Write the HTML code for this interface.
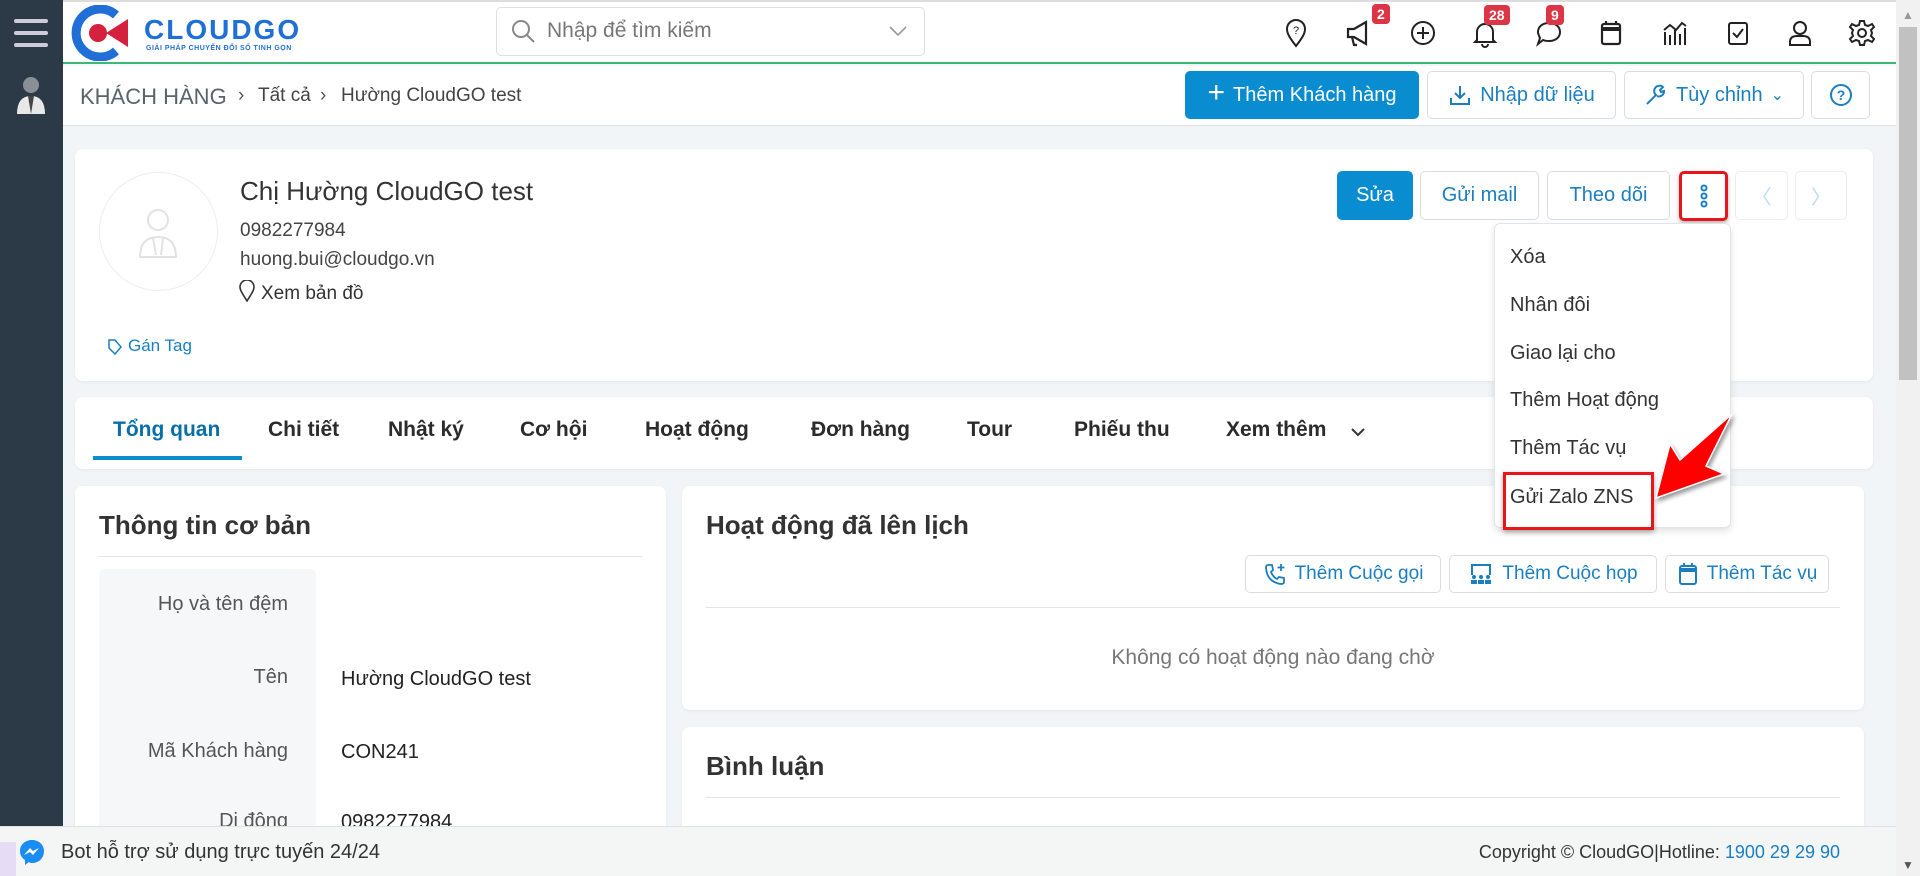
<!DOCTYPE html>
<html style="overflow:hidden"><head><meta charset="utf-8"><style>
*{box-sizing:border-box;margin:0;padding:0}
body{width:1920px;height:876px;overflow:hidden;background:#f2f5f8;font-family:"Liberation Sans","Noto Sans CJK SC",sans-serif;position:relative;color:#222}
.a{position:absolute}
.card{position:absolute;background:#fff;border-radius:8px;box-shadow:0 1px 3px rgba(0,0,0,.06)}
.btn{position:absolute;border:1px solid #d9dde2;border-radius:5px;background:#fff;color:#1a7fc1;font-size:20px;display:flex;align-items:center;justify-content:center;gap:8px}
.ic{position:absolute;top:18px;width:30px;height:30px}
.badge{position:absolute;background:#dc3545;color:#fff;font-size:14px;font-weight:bold;border-radius:4px;padding:1px 5px;line-height:18px}
.tab{position:absolute;top:418px;font-size:21px;font-weight:600;color:#2b2b2b}
.mi{position:absolute;left:1510px;font-size:20px;color:#333}
.lbl{position:absolute;right:0;width:190px;text-align:right;font-size:20px;color:#555}
</style></head><body>
<div class="a" style="left:0;top:0;width:1920px;height:64px;background:#fff;border-bottom:2px solid #3cb878"></div>
<div class="a" style="left:0;top:0;width:1920px;height:2px;background:#ddd"></div>
<div class="a" style="left:0;top:0;width:63px;height:876px;background:#2c3a48"></div>
<div class="a" style="left:14px;top:19px;width:34px;height:4px;background:#ccd;border-radius:2px"></div>
<div class="a" style="left:14px;top:31px;width:34px;height:4px;background:#ccd;border-radius:2px"></div>
<div class="a" style="left:14px;top:43px;width:34px;height:4px;background:#ccd;border-radius:2px"></div>
<svg class="a" style="left:14px;top:74px" width="34" height="40" viewBox="0 0 34 40"><circle cx="17" cy="11" r="8" fill="#8a8f96"/><path d="M3 40 Q3 22 17 22 Q31 22 31 40Z" fill="#e8e8e8"/><path d="M14 22 L17 40 L20 22Z" fill="#444"/></svg>
<svg class="a" style="left:70px;top:5px" width="62" height="56" viewBox="0 0 62 56"><path d="M46 10 A24 24 0 1 0 46 46" fill="none" stroke="#1f6fd6" stroke-width="9"/><circle cx="28" cy="28" r="9" fill="#d4213d"/><path d="M36 28 L58 14 L58 42Z" fill="#d4213d"/></svg>
<div class="a" style="left:144px;top:14px;font-size:28px;font-weight:bold;color:#1f6fd6;letter-spacing:2px">CLOUDGO</div>
<div class="a" style="left:146px;top:45px;font-size:7px;font-weight:bold;color:#1f6fd6;letter-spacing:.5px">GIẢI PHÁP CHUYỂN ĐỔI SỐ TINH GỌN</div>
<div class="a" style="left:496px;top:7px;width:429px;height:49px;border:1px solid #dcdfe3;border-radius:5px"></div>
<svg class="a" style="left:510px;top:18px" width="26" height="26" viewBox="0 0 26 26"><circle cx="11" cy="11" r="8" fill="none" stroke="#888" stroke-width="2"/><path d="M17 17 L24 24" stroke="#888" stroke-width="2"/></svg>
<div class="a" style="left:547px;top:19px;font-size:21px;color:#777">Nhập để tìm kiếm</div>
<svg class="a" style="left:888px;top:24px" width="20" height="14"><path d="M2 3 L10 11 L18 3" fill="none" stroke="#999" stroke-width="1.6"/></svg>
<svg class="ic" style="left:1281px" viewBox="0 0 30 30" fill="none" stroke="#222" stroke-width="2"><path d="M15 28 C8 19 6 15 6 11 A9 9 0 0 1 24 11 C24 15 22 19 15 28Z"/><text x="15" y="16" font-size="11" text-anchor="middle" fill="#222" stroke="none">?</text></svg>
<svg class="ic" style="left:1344px" viewBox="0 0 30 30" fill="none" stroke="#222" stroke-width="2.2"><path d="M4 11 H10 L22 4 V26 L10 19 H4Z M8 19 L10 27 H13"/></svg>
<svg class="ic" style="left:1408px" viewBox="0 0 30 30" fill="none" stroke="#222" stroke-width="2"><circle cx="15" cy="15" r="11"/><path d="M15 9 V21 M9 15 H21"/></svg>
<svg class="ic" style="left:1470px" viewBox="0 0 30 30" fill="none" stroke="#222" stroke-width="2"><path d="M7 22 V14 A8 8 0 0 1 23 14 V22 L25 24 H5Z M12 26 A3 3 0 0 0 18 26"/></svg>
<svg class="ic" style="left:1534px" viewBox="0 0 30 30" fill="none" stroke="#222" stroke-width="2"><path d="M15 5 C22 5 26 9 26 14 C26 19 22 23 15 23 C13 23 11 23 9 22 L4 26 L6 20 C5 18 4 16 4 14 C4 9 8 5 15 5Z"/></svg>
<svg class="ic" style="left:1596px" viewBox="0 0 30 30" fill="none" stroke="#222" stroke-width="2.2"><rect x="6" y="6" width="18" height="20" rx="2"/><path d="M6 11 H24" stroke-width="4"/><path d="M10 3 V7 M20 3 V7"/></svg>
<svg class="ic" style="left:1660px" viewBox="0 0 30 30" fill="none" stroke="#222" stroke-width="2"><path d="M5 27 V14 M10 27 V17 M15 27 V12 M20 27 V16 M25 27 V10 M4 12 L10 7 L16 12 L22 5 L26 8"/></svg>
<svg class="ic" style="left:1723px" viewBox="0 0 30 30" fill="none" stroke="#222" stroke-width="2"><rect x="6" y="5" width="18" height="21" rx="2"/><path d="M10 15 L14 19 L20 11"/></svg>
<svg class="ic" style="left:1785px" viewBox="0 0 30 30" fill="none" stroke="#222" stroke-width="2"><circle cx="15" cy="10" r="6"/><path d="M5 27 V24 Q5 18 12 18 H18 Q25 18 25 24 V27Z"/></svg>
<svg class="ic" style="left:1847px" viewBox="0 0 30 30" fill="none" stroke="#222" stroke-width="2"><circle cx="15" cy="15" r="4"/><path d="M13 3 H17 L18 7 L21 8 L25 6 L27 9 L24 12 L25 15 L24 18 L27 21 L25 24 L21 22 L18 23 L17 27 H13 L12 23 L9 22 L5 24 L3 21 L6 18 L5 15 L6 12 L3 9 L5 6 L9 8 L12 7Z"/></svg>
<div class="badge" style="left:1372px;top:4px">2</div>
<div class="badge" style="left:1484px;top:5px">28</div>
<div class="badge" style="left:1546px;top:5px">9</div>
<div class="a" style="left:63px;top:66px;width:1833px;height:60px;background:#fff;border-bottom:1px solid #dde1e5"></div>
<div class="a" style="left:80px;top:84px;font-size:22px;color:#58636d">KHÁCH HÀNG</div>
<div class="a" style="left:238px;top:85px;font-size:19px;color:#555">›</div>
<div class="a" style="left:258px;top:85px;font-size:19px;color:#444">Tất cả</div>
<div class="a" style="left:320px;top:85px;font-size:19px;color:#555">›</div>
<div class="a" style="left:341px;top:85px;font-size:19px;color:#444">Hường CloudGO test</div>
<div class="btn" style="left:1185px;top:71px;width:234px;height:48px;background:#0a8dd0;border-color:#0a8dd0;color:#fff"><span style="font-size:30px;font-weight:300;margin-top:-4px">+</span>Thêm Khách hàng</div>
<div class="btn" style="left:1427px;top:71px;width:189px;height:48px"><svg width="24" height="24" viewBox="0 0 24 24" fill="none" stroke="#1a7fc1" stroke-width="2"><path d="M12 3 V15 M7 10 L12 15 L17 10 M3 15 V21 H21 V15"/></svg>Nhập dữ liệu</div>
<div class="btn" style="left:1624px;top:71px;width:180px;height:48px"><svg width="24" height="24" viewBox="0 0 24 24" fill="none" stroke="#1a7fc1" stroke-width="2"><path d="M3 21 L12 12 A5 5 0 0 1 19 4 L16 7 L17 9 L20 8 A5 5 0 0 1 13 13"/></svg>Tùy chỉnh <span style="font-size:16px">⌄</span></div>
<div class="btn" style="left:1811px;top:71px;width:59px;height:48px"><svg width="26" height="26" viewBox="0 0 26 26" fill="none" stroke="#1a7fc1" stroke-width="2"><circle cx="13" cy="13" r="10"/><text x="13" y="18" font-size="14" font-weight="bold" text-anchor="middle" fill="#1a7fc1" stroke="none">?</text></svg></div>
<div class="card" style="left:75px;top:149px;width:1798px;height:232px"></div>
<div class="a" style="left:99px;top:172px;width:119px;height:119px;border:1px solid #eee;border-radius:50%"></div>
<svg class="a" style="left:136px;top:207px" width="48" height="52" viewBox="0 0 48 52" fill="none" stroke="#e2e2e2" stroke-width="2"><circle cx="22" cy="13" r="10"/><path d="M4 50 Q4 30 22 30 Q40 30 40 50Z M17 31 L20 48 M27 31 L25 48"/></svg>
<div class="a" style="left:240px;top:176px;font-size:26px;color:#333">Chị Hường CloudGO test</div>
<div class="a" style="left:240px;top:220px;font-size:19px;color:#444">0982277984</div>
<div class="a" style="left:240px;top:249px;font-size:19px;color:#444">huong.bui@cloudgo.vn</div>
<svg class="a" style="left:239px;top:280px" width="16" height="22" viewBox="0 0 16 22" fill="none" stroke="#333" stroke-width="1.6"><path d="M8 21 C3 13 1 10 1 7 A7 7 0 0 1 15 7 C15 10 13 13 8 21Z"/></svg>
<div class="a" style="left:261px;top:283px;font-size:19px;color:#333">Xem bản đồ</div>
<svg class="a" style="left:107px;top:338px" width="16" height="18" viewBox="0 0 16 18" fill="none" stroke="#1a7fc1" stroke-width="1.5"><path d="M2 2 H8 L14 9 L8 16 L2 10Z"/></svg>
<div class="a" style="left:128px;top:336px;font-size:17px;color:#1a7fc1">Gán Tag</div>
<div class="btn" style="left:1337px;top:171px;width:76px;height:49px;background:#0a8dd0;border-color:#0a8dd0;color:#fff">Sửa</div>
<div class="btn" style="left:1420px;top:171px;width:119px;height:49px">Gửi mail</div>
<div class="btn" style="left:1547px;top:171px;width:123px;height:49px">Theo dõi</div>
<div class="btn" style="left:1679px;top:171px;width:49px;height:50px;border:3px solid #e8151b;box-shadow:0 2px 4px rgba(0,0,0,.3)"><svg width="10" height="26" viewBox="0 0 10 26" fill="none" stroke="#1a7fc1" stroke-width="2"><circle cx="5" cy="5" r="2.5"/><circle cx="5" cy="13" r="2.5"/><circle cx="5" cy="21" r="2.5"/></svg></div>
<div class="btn" style="left:1735px;top:171px;width:53px;height:49px;color:#b9dcf1;border-color:#eceef0">〈</div>
<div class="btn" style="left:1795px;top:171px;width:52px;height:49px;color:#b9dcf1;border-color:#eceef0">〉</div>
<div class="card" style="left:75px;top:397px;width:1798px;height:72px"></div>
<div class="tab" style="left:113px;color:#0a6ea8">Tổng quan</div>
<div class="a" style="left:93px;top:456px;width:149px;height:4px;background:#0a8dd0"></div>
<div class="tab" style="left:268px">Chi tiết</div>
<div class="tab" style="left:388px">Nhật ký</div>
<div class="tab" style="left:520px">Cơ hội</div>
<div class="tab" style="left:645px">Hoạt động</div>
<div class="tab" style="left:811px">Đơn hàng</div>
<div class="tab" style="left:967px">Tour</div>
<div class="tab" style="left:1074px">Phiếu thu</div>
<div class="tab" style="left:1226px">Xem thêm</div>
<svg class="a" style="left:1350px;top:426px" width="16" height="12"><path d="M2 3 L8 9 L14 3" fill="none" stroke="#333" stroke-width="2"/></svg>
<div class="card" style="left:75px;top:486px;width:591px;height:390px;border-radius:8px 8px 0 0"></div>
<div class="a" style="left:99px;top:510px;font-size:26px;font-weight:600;color:#333">Thông tin cơ bản</div>
<div class="a" style="left:99px;top:556px;width:543px;height:1px;background:#e2e4e7"></div>
<div class="a" style="left:99px;top:569px;width:217px;height:300px;background:#f6f7f9;border-radius:6px">
<div class="lbl" style="right:28px;top:24px">Họ và tên đệm</div>
<div class="lbl" style="right:28px;top:97px">Tên</div>
<div class="lbl" style="right:28px;top:171px">Mã Khách hàng</div>
<div class="lbl" style="right:28px;top:241px">Di động</div>
</div>
<div class="a" style="left:341px;top:668px;font-size:20px;color:#222">Hường CloudGO test</div>
<div class="a" style="left:341px;top:741px;font-size:20px;color:#222">CON241</div>
<div class="a" style="left:341px;top:811px;font-size:20px;color:#222">0982277984</div>
<div class="card" style="left:682px;top:486px;width:1182px;height:224px"></div>
<div class="a" style="left:706px;top:510px;font-size:26px;font-weight:600;color:#333">Hoạt động đã lên lịch</div>
<div class="btn" style="left:1245px;top:555px;width:196px;height:38px;font-size:19px"><svg width="24" height="24" viewBox="0 0 24 24" fill="none" stroke="#1a7fc1" stroke-width="1.8"><path d="M5 3 L9 3 L10 8 L8 10 Q10 15 14 17 L16 15 L21 16 V20 Q21 22 18 22 Q4 20 3 6 Q3 3 5 3Z M18 2 V9 M14.5 5.5 H21.5"/></svg>Thêm Cuộc gọi</div>
<div class="btn" style="left:1449px;top:555px;width:208px;height:38px;font-size:19px"><svg width="26" height="24" viewBox="0 0 26 24" fill="#1a7fc1"><path d="M3 2 H23 V13 H21 V4 H5 V13 H3Z"/><circle cx="6" cy="15" r="2"/><circle cx="13" cy="15" r="2"/><circle cx="20" cy="15" r="2"/><rect x="3" y="18" width="6" height="4"/><rect x="10" y="18" width="6" height="4"/><rect x="17" y="18" width="6" height="4"/></svg>Thêm Cuộc họp</div>
<div class="btn" style="left:1665px;top:555px;width:164px;height:38px;font-size:19px"><svg width="22" height="24" viewBox="0 0 22 24" fill="none" stroke="#1a7fc1" stroke-width="2"><rect x="3" y="4" width="16" height="18" rx="2"/><path d="M3 8 H19" stroke-width="4"/><path d="M7 1 V5 M15 1 V5"/></svg>Thêm Tác vụ</div>
<div class="a" style="left:706px;top:607px;width:1134px;height:1px;background:#e2e4e7"></div>
<div class="a" style="left:682px;top:646px;width:1182px;text-align:center;font-size:21px;color:#777">Không có hoạt động nào đang chờ</div>
<div class="card" style="left:682px;top:727px;width:1182px;height:149px;border-radius:8px 8px 0 0"></div>
<div class="a" style="left:706px;top:751px;font-size:26px;font-weight:600;color:#333">Bình luận</div>
<div class="a" style="left:706px;top:797px;width:1134px;height:1px;background:#e2e4e7"></div>
<div class="a" style="left:1494px;top:223px;width:237px;height:305px;background:#fff;border:1px solid #e2e4e7;border-radius:6px;box-shadow:0 3px 8px rgba(0,0,0,.12)"></div>
<div class="mi" style="top:246px">Xóa</div>
<div class="mi" style="top:294px">Nhân đôi</div>
<div class="mi" style="top:342px">Giao lại cho</div>
<div class="mi" style="top:389px">Thêm Hoạt động</div>
<div class="mi" style="top:437px">Thêm Tác vụ</div>
<div class="mi" style="top:486px">Gửi Zalo ZNS</div>
<div class="a" style="left:1503px;top:472px;width:151px;height:58px;border:3px solid #e8151b;box-shadow:0 2px 5px rgba(0,0,0,.35)"></div>
<svg class="a" style="left:1650px;top:410px" width="90" height="100" viewBox="0 0 90 100"><path d="M6 88 L20 34 L30 50 L82 4 L56 56 L74 64Z" fill="#f00" stroke="#fff" stroke-width="1.5" style="filter:drop-shadow(2px 3px 2px rgba(0,0,0,.4))"/></svg>
<div class="a" style="left:0;top:826px;width:1896px;height:50px;background:#f4f5f5;border-top:1px solid #dfe1e3"></div>
<div class="a" style="left:0;top:842px;width:16px;height:34px;background:#e6dcf5"></div>
<svg class="a" style="left:18px;top:838px" width="28" height="28" viewBox="0 0 28 28"><path d="M14 2 C7 2 2 7 2 13 C2 17 4 20 7 22 V27 L11 24 C12 25 13 25 14 25 C21 25 26 20 26 13 C26 7 21 2 14 2Z" fill="#1b8cf2"/><path d="M6 17 L12 10 L15 13 L21 10 L15 17 L12 14Z" fill="#fff"/></svg>
<div class="a" style="left:61px;top:841px;font-size:20px;color:#333">Bot hỗ trợ sử dụng trực tuyến 24/24</div>
<div class="a" style="right:80px;top:842px;font-size:18px;color:#333">Copyright © CloudGO|Hotline: <span style="color:#1a7fc1">1900 29 29 90</span></div>
<div class="a" style="left:1896px;top:0;width:24px;height:876px;background:#f1f1f1"></div>
<div class="a" style="left:1899px;top:27px;width:18px;height:353px;background:#c1c1c1"></div>
<div class="a" style="left:1902px;top:8px;font-size:12px;color:#999">▲</div>
<div class="a" style="left:1902px;top:858px;font-size:12px;color:#555">▼</div>
</body></html>
